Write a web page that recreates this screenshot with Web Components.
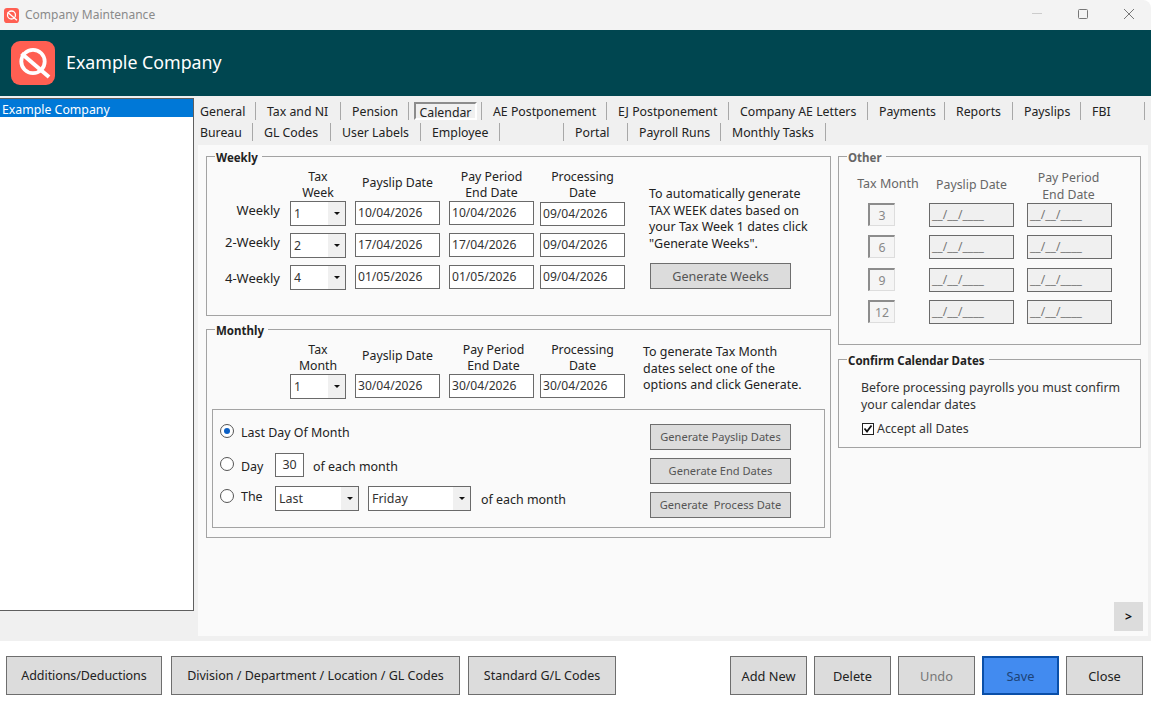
<!DOCTYPE html>
<html>
<head>
<meta charset="utf-8">
<title>Company Maintenance</title>
<style>
  html, body { margin: 0; padding: 0; background: #fff; }
  body { font: 12.3px/16.5px "Noto Sans", sans-serif; color: #222; }
</style>
</head>
<body>
<company-maintenance></company-maintenance>
<script>
class UiBase extends HTMLElement {
    constructor() {
        super();
        this.attachShadow({ mode: 'open' });
        this.shadowRoot.innerHTML = `<style>${this.constructor.css}</style>${this.constructor.html}`;
    }
}

const LOGO = `<svg viewBox="0 0 44 44" width="100%" height="100%">
    <rect width="44" height="44" rx="9" fill="#ff5f52"/>
    <circle cx="22" cy="20.5" r="11.7" fill="none" stroke="#fff" stroke-width="3.8"/>
    <path d="M10.5 12.5 L38 36" stroke="#fff" stroke-width="4" fill="none"/>
</svg>`;

class TitleBar extends UiBase {
    static css = `
        :host { display: flex; align-items: center; height: 30px; background: #f3f3f3; border-top-right-radius: 8px; }
        .logo { width: 15px; height: 15px; margin-left: 4px; }
        .title { margin-left: 6px; color: #8a8a8a; font-size: 12px; }
        .controls { margin-left: auto; margin-bottom: 2px; display: flex; align-items: center; }
        svg.c { display: block; width: 10px; height: 10px; margin-right: 36px; fill: none; stroke: #777; stroke-width: 1; }
        svg.c:last-child { margin-right: 17px; }
        svg.min { stroke: #ccc; }
    `;
    static html = `
        <div class="logo">${LOGO}</div>
        <span class="title">Company Maintenance</span>
        <div class="controls">
            <svg class="c min" viewBox="0 0 10 10"><path d="M0 4.5H10"/></svg>
            <svg class="c" viewBox="0 0 10 10"><rect x=".5" y=".5" width="9" height="9" rx="1"/></svg>
            <svg class="c" viewBox="0 0 10 10"><path d="M0 0L10 10M10 0L0 10"/></svg>
        </div>
    `;
}

class BannerHead extends UiBase {
    static css = `
        :host { display: flex; align-items: center; height: 66px; background: #004650; color: #fff; }
        .logo { width: 44px; height: 44px; margin-left: 11px; }
        .name { margin-left: 11px; margin-bottom: 2px; font-size: 17.8px; }
    `;
    static html = `<div class="logo">${LOGO}</div><span class="name"><slot></slot></span>`;
}

class CompanyList extends UiBase {
    static css = `
        :host { display: block; margin-top: 2px; height: 511px; background: #fff; border: 1px solid #5f5f5f; border-left: 0; }
        .row { background: #0078d7; color: #fff; height: 18px; line-height: 22px; padding-left: 2px; }
    `;
    static html = `<div class="row"><slot></slot></div>`;
}

class TabItem extends UiBase {
    static css = `
        :host { display: block; box-sizing: border-box; height: 18px; line-height: 20px; padding-left: 11px; border-right: 1px solid #a8a8a8; white-space: nowrap; color: #222; }
        :host([first]) { padding-left: 2px; }
        .on { display: block; box-sizing: border-box; margin-left: -6px; width: 63px; height: 18px; text-align: center; line-height: 18px;
              border: 2px solid #fff; border-top-color: #8c8c8c; border-left-color: #8c8c8c; }
    `;
    static html = `<slot></slot>`;
    connectedCallback() {
        this.style.width = this.getAttribute('w') + 'px';
        if (this.hasAttribute('active')) {
            this.shadowRoot.innerHTML = `<style>${TabItem.css}</style><span class="on"><slot></slot></span>`;
        }
    }
}

class TabStrip extends UiBase {
    static css = `
        :host { display: flex; height: 21px; }
    `;
    static html = `<slot></slot>`;
}

class GroupBox extends UiBase {
    static css = `
        :host { display: block; box-sizing: border-box; position: relative; border: 1px solid #a3a3a3; }
        .legend { position: absolute; left: 8px; top: -7px; padding: 0 4px 0 1px; background: #fafafa; font-size: 11.5px; font-weight: 700; line-height: 16px; color: #222; }
        :host([muted]) .legend { color: #666; }
    `;
    static html = `<div class="legend"></div><slot></slot>`;
    connectedCallback() {
        this.shadowRoot.querySelector('.legend').textContent = this.getAttribute('legend');
    }
}

class DateField extends UiBase {
    static css = `
        :host { display: block; box-sizing: border-box; width: 85px; height: 24px; line-height: 21px; padding-left: 2px; background: #fff; border: 1px solid #6a6a6a; color: #333; font-size: 12.1px; }
        :host([disabled]) { background: #f0f0f0; color: #777; }
    `;
    static html = `<slot></slot>`;
}

class BoxField extends UiBase {
    static css = `
        :host { display: block; box-sizing: border-box; width: 29px; height: 24px; line-height: 21px; text-align: center; background: #fff; border: 1px solid #6a6a6a; color: #333; }
        :host([sunken]) { width: 27px; height: 23px; background: #f5f5f5; color: #888; border: 1px solid #ddd; border-top: 2px solid #8c8c8c; border-left: 2px solid #8c8c8c; }
    `;
    static html = `<slot></slot>`;
}

class ComboBox extends UiBase {
    static css = `
        :host { display: flex; box-sizing: border-box; width: 56px; height: 25px; background: #fff; border: 1px solid #6a6a6a; color: #333; }
        .v { flex: 1; padding-left: 3px; line-height: 24px; }
        .a { width: 17px; background: #f0f0f0; display: flex; align-items: center; justify-content: center; }
        .a i { display: block; width: 0; height: 0; border: 3px solid transparent; border-top: 3px solid #111; border-bottom: 0; }
    `;
    static html = `<div class="v"><slot></slot></div><div class="a"><i></i></div>`;
}

class UiRadio extends UiBase {
    static css = `
        :host { display: block; box-sizing: border-box; width: 14px; height: 14px; border: 1px solid #555; border-radius: 50%; background: #fff; padding: 3px; }
        i { display: none; width: 6px; height: 6px; border-radius: 50%; background: #0b5fc4; }
        :host([checked]) i { display: block; }
    `;
    static html = `<i></i>`;
}

class UiCheck extends UiBase {
    static css = `
        :host { display: block; box-sizing: border-box; width: 12px; height: 12px; border: 1px solid #222; background: #fff; }
        svg { display: block; width: 10px; height: 10px; fill: none; stroke: #111; stroke-width: 1.8; }
    `;
    static html = `<svg viewBox="0 0 10 10"><path d="M1.5 4.5L4 7.5L8.5 1.5"/></svg>`;
}

class UiButton extends UiBase {
    static css = `
        :host { display: flex; align-items: center; justify-content: center; box-sizing: border-box; padding-top: 1px; background: #dcdcdc; border: 1px solid #6e6e6e; color: #222; white-space: nowrap; }
        :host([muted]) { color: #555; }
        :host([disabled]) { color: #777; }
        :host([primary]) { background: #428bf0; border: 2px solid #0a4fa8; color: #1d4377; }
        :host([bare]) { background: #dcdcdc; border: 0; font-weight: 700; color: #111; }
    `;
    static html = `<slot></slot>`;
}

class CompanyMaintenance extends UiBase {
    static css = `
        :host { display: block; width: 1151px; height: 707px; overflow: hidden; font: 12.3px/16.5px "Noto Sans", sans-serif; }
        .main { display: grid; grid-template-columns: 194px 1fr; height: 545px; background: #f0f0f0; }
        .work { display: flex; flex-direction: column; padding: 0 3px 5px 4px; min-width: 0; }
        .tabs { height: 49px; box-sizing: border-box; padding-top: 6px; }
        .panel { flex: 1; display: flex; flex-direction: column; background: #fafafa; padding: 11px 0 5px 8px; }
        .cols { display: grid; grid-template-columns: 625px 303px; column-gap: 7px; align-items: start; }
        .col { display: flex; flex-direction: column; }
        .col.l { gap: 13px; }
        .col.r { gap: 14px; }

        .weekly { height: 160px; }
        .monthly { height: 209px; }
        .grid { display: grid; padding-top: 12px; }
        .weekly .grid { grid-template-columns: 83px 65px 94px 91px 109px 1fr; grid-template-rows: 32px 32px 32px 32px; }
        .monthly .grid { grid-template-columns: 83px 65px 94px 91px 103px 1fr; grid-template-rows: 32px 35px; }
        .head { text-align: center; align-self: center; width: 85px; }
        .head.tax { width: 56px; }
        .head.one { margin-top: -4px; }
        .rl { text-align: right; padding-right: 10px; line-height: 18px; font-size: 13px; }
        .rl.low { margin-top: 4px; }
        .nudge { margin-top: 1px; }
        .help { grid-column: 6; grid-row: 1 / 5; padding-top: 17px; font-size: 12.45px; }
        .help ui-button { width: 141px; height: 26px; margin-top: 11px; margin-left: 1px; padding-top: 2px; font-size: 12.6px; }
        .monthly .help { padding-top: 2px; grid-row: 1 / 3; }

        .opts { box-sizing: border-box; display: flex; justify-content: space-between; height: 119px; width: 613px; margin-left: 5px; border: 1px solid #a3a3a3; padding: 5px 33px 0 7px; }
        .rows { display: flex; flex-direction: column; font-size: 12.45px; }
        .opt { display: flex; align-items: flex-start; height: 33px; }
        .opt.last { height: 34px; }
        .opt .t { margin-left: 7px; }
        .opt .t.w { width: 34px; }
        .opt .gap9 { margin-left: 9px; }
        .opt .gap10 { margin-left: 10px; }
        .m4 { margin-top: 4px; }
        .m5 { margin-top: 5px; }
        .m7 { margin-top: 7px; }
        .m9 { margin-top: 9px; }
        .m10 { margin-top: 10px; }
        .m11 { margin-top: 11px; }
        .gens { display: flex; flex-direction: column; gap: 8px; padding-top: 9px; }
        .gens ui-button { width: 141px; height: 26px; font-size: 11.1px; padding-top: 0; }

        .other { height: 189px; color: #666; }
        .other .grid { grid-template-columns: 90px 98px 1fr; grid-template-rows: 34px 32.3px 32.3px 32.3px 32.3px; }
        .other .tm { text-align: center; padding-left: 8px; align-self: center; margin-top: -3px; font-size: 12.5px; }
        .other .head.one { margin-top: -2px; }
        .other .head.two { margin-left: -1px; margin-top: 1px; }
        .other .s { margin-left: 29px; }
        .confirm { height: 89px; padding: 20px 0 0 22px; color: #333; font-size: 12.35px; }
        .accept { display: flex; align-items: center; height: 16px; margin-top: 8px; padding-left: 1px; }
        .accept span { margin-left: 3px; }

        .next { align-self: flex-end; margin: auto 5px 0 0; width: 29px; height: 29px; }

        .foot { display: flex; justify-content: space-between; height: 66px; box-sizing: border-box; padding: 15px 8px 0 6px; background: #fff; font-size: 12.5px; }
        .foot div { display: flex; gap: 8px; height: 39px; }
        .foot .r ui-button { width: 77px; margin-left: -1px; font-size: 12.8px; }
        .foot .r { gap: 8px; }
    `;
    static html = `
        <title-bar></title-bar>
        <banner-head>Example Company</banner-head>
        <div class="main">
            <company-list>Example Company</company-list>
            <div class="work">
                <div class="tabs">
                    <tab-strip>
                        <tab-item w="58" first>General</tab-item>
                        <tab-item w="85">Tax and NI</tab-item>
                        <tab-item w="68">Pension</tab-item>
                        <tab-item w="73" active>Calendar</tab-item>
                        <tab-item w="125">AE Postponement</tab-item>
                        <tab-item w="122">EJ Postponement</tab-item>
                        <tab-item w="139">Company AE Letters</tab-item>
                        <tab-item w="77">Payments</tab-item>
                        <tab-item w="68">Reports</tab-item>
                        <tab-item w="68">Payslips</tab-item>
                        <tab-item w="64">FBI</tab-item>
                    </tab-strip>
                    <tab-strip>
                        <tab-item w="55" first>Bureau</tab-item>
                        <tab-item w="78">GL Codes</tab-item>
                        <tab-item w="90">User Labels</tab-item>
                        <tab-item w="79">Employee</tab-item>
                        <tab-item w="64"></tab-item>
                        <tab-item w="64">Portal</tab-item>
                        <tab-item w="93">Payroll Runs</tab-item>
                        <tab-item w="105">Monthly Tasks</tab-item>
                    </tab-strip>
                </div>
                <div class="panel">
                    <div class="cols">
                        <div class="col l">
                            <group-box class="weekly" legend="Weekly">
                                <div class="grid">
                                    <span></span>
                                    <div class="head tax">Tax<br>Week</div>
                                    <div class="head one">Payslip Date</div>
                                    <div class="head">Pay Period<br>End Date</div>
                                    <div class="head">Processing<br>Date</div>
                                    <div class="help">To automatically generate<br>TAX WEEK dates based on<br>your Tax Week 1 dates click<br>"Generate Weeks".
                                        <ui-button muted>Generate Weeks</ui-button>
                                    </div>

                                    <div class="rl">Weekly</div>
                                    <combo-box>1</combo-box>
                                    <date-field>10/04/2026</date-field>
                                    <date-field>10/04/2026</date-field>
                                    <date-field class="nudge">09/04/2026</date-field>

                                    <div class="rl">2-Weekly</div>
                                    <combo-box>2</combo-box>
                                    <date-field>17/04/2026</date-field>
                                    <date-field>17/04/2026</date-field>
                                    <date-field>09/04/2026</date-field>

                                    <div class="rl low">4-Weekly</div>
                                    <combo-box>4</combo-box>
                                    <date-field>01/05/2026</date-field>
                                    <date-field>01/05/2026</date-field>
                                    <date-field>09/04/2026</date-field>
                                </div>
                            </group-box>
                            <group-box class="monthly" legend="Monthly">
                                <div class="grid">
                                    <span></span>
                                    <div class="head tax">Tax<br>Month</div>
                                    <div class="head one">Payslip Date</div>
                                    <div class="head" style="margin-left:2px">Pay Period<br>End Date</div>
                                    <div class="head">Processing<br>Date</div>
                                    <div class="help">To generate Tax Month<br>dates select one of the<br>options and click Generate.</div>

                                    <span></span>
                                    <combo-box>1</combo-box>
                                    <date-field>30/04/2026</date-field>
                                    <date-field>30/04/2026</date-field>
                                    <date-field>30/04/2026</date-field>
                                </div>
                                <div class="opts">
                                    <div class="rows">
                                        <div class="opt"><ui-radio class="m9" checked></ui-radio><span class="t m10">Last Day Of Month</span></div>
                                        <div class="opt last"><ui-radio class="m9"></ui-radio><span class="t w m11">Day</span><box-field class="m5">30</box-field><span class="gap9 m11">of each month</span></div>
                                        <div class="opt"><ui-radio class="m7"></ui-radio><span class="t w m7">The</span>
                                            <combo-box class="m4" style="width:84px">Last</combo-box>
                                            <combo-box class="gap9 m4" style="width:103px">Friday</combo-box>
                                            <span class="gap10 m10">of each month</span></div>
                                    </div>
                                    <div class="gens">
                                        <ui-button muted>Generate Payslip Dates</ui-button>
                                        <ui-button muted>Generate End Dates</ui-button>
                                        <ui-button muted>Generate&nbsp; Process Date</ui-button>
                                    </div>
                                </div>
                            </group-box>
                        </div>
                        <div class="col r">
                            <group-box class="other" legend="Other" muted>
                                <div class="grid">
                                    <div class="tm">Tax Month</div>
                                    <div class="head one">Payslip Date</div>
                                    <div class="head two">Pay Period<br>End Date</div>
                                    <box-field class="s" sunken>3</box-field><date-field disabled>__/__/____</date-field><date-field disabled>__/__/____</date-field>
                                    <box-field class="s" sunken>6</box-field><date-field disabled>__/__/____</date-field><date-field disabled>__/__/____</date-field>
                                    <box-field class="s" sunken>9</box-field><date-field disabled>__/__/____</date-field><date-field disabled>__/__/____</date-field>
                                    <box-field class="s" sunken>12</box-field><date-field disabled>__/__/____</date-field><date-field disabled>__/__/____</date-field>
                                </div>
                            </group-box>
                            <group-box class="confirm" legend="Confirm Calendar Dates">
                                Before processing payrolls you must confirm<br>your calendar dates
                                <div class="accept"><ui-check></ui-check><span>Accept all Dates</span></div>
                            </group-box>
                        </div>
                    </div>
                    <ui-button class="next" bare>&gt;</ui-button>
                </div>
            </div>
        </div>
        <div class="foot">
            <div>
                <ui-button style="width:156px;letter-spacing:-.08px">Additions/Deductions</ui-button>
                <ui-button style="width:289px;margin-left:1px">Division / Department / Location / GL Codes</ui-button>
                <ui-button style="width:148px">Standard G/L Codes</ui-button>
            </div>
            <div class="r">
                <ui-button>Add New</ui-button>
                <ui-button>Delete</ui-button>
                <ui-button disabled>Undo</ui-button>
                <ui-button primary>Save</ui-button>
                <ui-button>Close</ui-button>
            </div>
        </div>
    `;
}

customElements.define('title-bar', TitleBar);
customElements.define('banner-head', BannerHead);
customElements.define('company-list', CompanyList);
customElements.define('tab-item', TabItem);
customElements.define('tab-strip', TabStrip);
customElements.define('group-box', GroupBox);
customElements.define('date-field', DateField);
customElements.define('box-field', BoxField);
customElements.define('combo-box', ComboBox);
customElements.define('ui-radio', UiRadio);
customElements.define('ui-check', UiCheck);
customElements.define('ui-button', UiButton);
customElements.define('company-maintenance', CompanyMaintenance);
</script>
</body>
</html>
